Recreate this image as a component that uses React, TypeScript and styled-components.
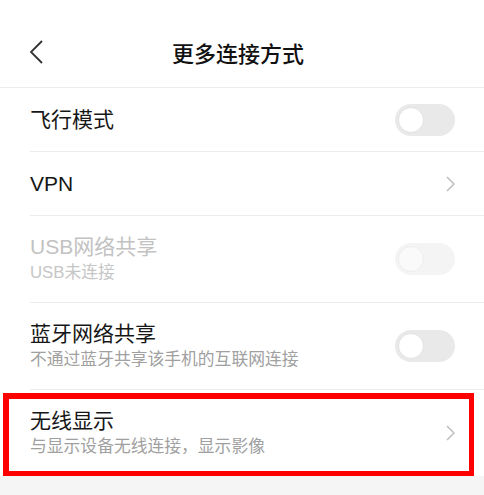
import React from "react";
import styled, { createGlobalStyle } from "styled-components";

const GlobalStyle = createGlobalStyle`
  html, body {
    margin: 0;
    padding: 0;
    background: #f5f5f5;
  }
  body {
    font-family: "Liberation Sans", "Noto Sans CJK SC", sans-serif;
    -webkit-font-smoothing: antialiased;
  }
`;

// Page wrapper
const Page = styled.div`
  width: 484px;
  background: #ffffff;
`;

// Top bar
const Header = styled.header`
  height: 88px;
  box-sizing: border-box;
  padding-top: 22px;
  display: flex;
  align-items: center;
  border-bottom: 1px solid #ececec;
`;

const BackButton = styled.button`
  width: 60px;
  height: 40px;
  padding: 0 0 0 29px;
  border: none;
  background: none;
  display: flex;
  align-items: center;
  margin-top: -5px;
  cursor: pointer;
`;

const Title = styled.h1`
  flex: 1;
  margin: 0;
  padding-right: 68px;
  text-align: center;
  font-size: 22px;
  line-height: 30px;
  font-weight: 500;
  color: #111111;
`;

// List rows
const List = styled.div`
  display: flex;
  flex-direction: column;
`;

const Row = styled.div`
  position: relative;
  padding-left: 30px;
`;

const RowBody = styled.div<{ $tall?: boolean; $last?: boolean }>`
  height: ${(p) => (p.$tall ? 86 : 63)}px;
  display: flex;
  align-items: center;
  padding-right: 29px;
  border-bottom: ${(p) => (p.$last ? "none" : "1px solid #ececec")};
`;

const Texts = styled.div`
  flex: 1;
  display: flex;
  flex-direction: column;
  gap: 2px;
`;

const RowTitle = styled.div<{ $disabled?: boolean }>`
  font-size: 21px;
  line-height: 26px;
  color: ${(p) => (p.$disabled ? "#c2c2c2" : "#161616")};
`;

const RowSub = styled.div<{ $disabled?: boolean }>`
  font-size: 16.8px;
  line-height: 22px;
  color: ${(p) => (p.$disabled ? "#c6c6c6" : "#a0a0a0")};
`;

// Toggle switch (off state)
const Switch = styled.div<{ $disabled?: boolean }>`
  width: 60px;
  height: 32px;
  box-sizing: border-box;
  border-radius: 16px;
  background: ${(p) => (p.$disabled ? "#f4f4f4" : "#e9e9e9")};
  display: flex;
  align-items: center;
  padding-left: 3px;
`;

const Knob = styled.div<{ $disabled?: boolean }>`
  width: 26px;
  height: 26px;
  box-sizing: border-box;
  border-radius: 50%;
  background: ${(p) => (p.$disabled ? "#fafafa" : "#ffffff")};
  border: 1px solid ${(p) => (p.$disabled ? "#eeeeee" : "#e2e2e2")};
`;

// Red annotation frame over the last row
const Highlight = styled.div`
  position: absolute;
  top: 3px;
  left: 3px;
  right: 10px;
  bottom: 0;
  border: 6px solid #ff0000;
  border-right-width: 5px;
  border-bottom-width: 5px;
  pointer-events: none;
`;

const BackIcon = () => (
  <svg width="14" height="24" viewBox="0 0 14 24">
    <polyline
      points="13,1 2,12 13,23"
      fill="none"
      stroke="#333333"
      strokeWidth="1.8"
      strokeLinejoin="miter"
    />
  </svg>
);

const Chevron = () => (
  <svg width="9" height="16" viewBox="0 0 9 16">
    <polyline
      points="1,1 8,8 1,15"
      fill="none"
      stroke="#bdbdbd"
      strokeWidth="1.5"
    />
  </svg>
);

type Item = {
  title: string;
  sub?: string;
  kind: "switch" | "arrow";
  disabled?: boolean;
  marked?: boolean;
};

const items: Item[] = [
  { title: "飞行模式", kind: "switch" },
  { title: "VPN", kind: "arrow" },
  { title: "USB网络共享", sub: "USB未连接", kind: "switch", disabled: true },
  { title: "蓝牙网络共享", sub: "不通过蓝牙共享该手机的互联网连接", kind: "switch" },
  { title: "无线显示", sub: "与显示设备无线连接，显示影像", kind: "arrow", marked: true },
];

export default function App() {
  return (
    <>
      <GlobalStyle />
      <Page>
        <Header>
          <BackButton aria-label="返回">
            <BackIcon />
          </BackButton>
          <Title>更多连接方式</Title>
        </Header>
        <List>
          {items.map((it, i) => (
            <Row key={it.title}>
              <RowBody $tall={!!it.sub} $last={i === items.length - 1}>
                <Texts>
                  <RowTitle $disabled={it.disabled}>{it.title}</RowTitle>
                  {it.sub && <RowSub $disabled={it.disabled}>{it.sub}</RowSub>}
                </Texts>
                {it.kind === "switch" ? (
                  <Switch $disabled={it.disabled}>
                    <Knob $disabled={it.disabled} />
                  </Switch>
                ) : (
                  <Chevron />
                )}
              </RowBody>
              {it.marked && <Highlight />}
            </Row>
          ))}
        </List>
      </Page>
    </>
  );
}
